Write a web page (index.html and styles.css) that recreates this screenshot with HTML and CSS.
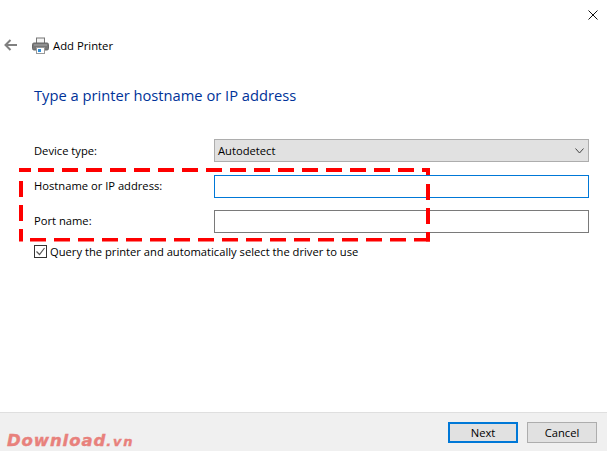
FILE: index.html
```html
<!DOCTYPE html>
<html lang="en">
<head>
<meta charset="utf-8">
<title>Add Printer</title>
<link rel="stylesheet" href="styles.css">
</head>
<body>
<div class="window">
  <div class="close-row">
    <svg class="close-icon" width="10" height="10" viewBox="0 0 10 10"><path d="M.5.5l9 9M9.5.5l-9 9" stroke="#111" stroke-width="1" fill="none"/></svg>
  </div>
  <header class="titlebar">
    <svg class="back-icon" width="14" height="12" viewBox="0 0 14 12"><path d="M13 6H2M6.500 1L1.500 6l5 5" stroke="#808080" stroke-width="2" fill="none"/></svg>
    <svg class="printer-icon" width="17" height="17" viewBox="0 0 17 17">
      <rect x="4.500" y="1" width="8" height="6" fill="#f4f4f4" stroke="#777"/>
      <rect x=".5" y="6" width="16" height="7" rx="1.5" fill="#777" stroke="#666"/>
      <rect x="2" y="7.5" width="13" height="1" fill="#aaa"/>
      <rect x="4.500" y="10.500" width="8" height="6" fill="#fff" stroke="#999"/>
      <rect x="6" y="12" width="3" height="3" fill="#2f8fd8"/>
    </svg>
    <span class="title">Add Printer</span>
  </header>
  <main class="content">
    <h1 class="heading">Type a printer hostname or IP address</h1>
    <form class="form">
      <label class="label">Device type:</label>
      <div class="combo"><span>Autodetect</span><svg width="9" height="6" viewBox="0 0 9 6"><path d="M.5.5L4.500 5 8.500.5" stroke="#444" fill="none"/></svg></div>
      <label class="label">Hostname or IP address:</label>
      <div class="input input-focus"></div>
      <label class="label">Port name:</label>
      <div class="input"></div>
    </form>
    <div class="check-row">
      <svg class="check" width="13" height="13" viewBox="0 0 13 13"><rect x=".5" y=".5" width="12" height="12" fill="#fff" stroke="#333"/><path d="M2.500 6.500l3 3 5-6.500" stroke="#555" stroke-width="1.200" fill="none"/></svg>
      <span>Query the printer and automatically select the driver to use</span>
    </div>
  </main>
  <footer class="footer">
    <span class="logo"><span class="logo-main">Download</span><span class="logo-tld">.vn</span></span>
    <div class="buttons">
      <div class="btn btn-default">Next</div>
      <div class="btn">Cancel</div>
    </div>
  </footer>
  <svg class="highlight" width="411" height="74" viewBox="0 0 411 74">
    <path class="dash-solid" d="M0 2H12"/>
    <path class="dash" d="M19 2H411"/>
    <path class="dash" d="M2 13V73.600"/>
    <path class="dash-solid" d="M409 0V7"/>
    <path class="dash" d="M409 16V73.600"/>
    <path class="dash dash-bottom" d="M11 71.800H411"/>
  </svg>
</div>
</body>
</html>
```
FILE: styles.css
```css
* { box-sizing: border-box; }
html, body { margin: 0; padding: 0; }
body {
  width: 607px;
  height: 451px;
  overflow: hidden;
  background: #fff;
  font-family: "Open Sans", "Noto Sans", sans-serif;
  font-size: 11.200px;
  color: #000;
}
.window {
  position: relative;
  width: 607px;
  height: 451px;
  display: flex;
  flex-direction: column;
}
.close-row {
  height: 34px;
  display: flex;
  justify-content: flex-end;
  padding: 10px 9px 0 0;
}
.close-icon { display: block; }
.titlebar {
  height: 22px;
  display: flex;
  align-items: center;
  padding-left: 4px;
}
.back-icon { margin-right: 14px; }
.printer-icon { margin-right: 4px; }
.title { font-size: 11.300px; }
.content {
  flex: 1;
  padding: 0 18px 0 34px;
}
.heading {
  margin: 28px 0 0;
  font-size: 14.700px;
  font-weight: 400;
  line-height: 22px;
  color: #003399;
}
.form {
  margin-top: 33px;
  display: grid;
  grid-template-columns: 180px 375px;
  grid-template-rows: 24px 23px 23px;
  row-gap: 12px;
  align-items: center;
}
.label { padding-bottom: 2px; }
.combo {
  align-self: start;
  height: 23px;
  background: #e1e1e1;
  border: 1px solid #adadad;
  display: flex;
  align-items: center;
  justify-content: space-between;
  padding: 0 4px 0 3px;
}
.input {
  height: 23px;
  background: #fff;
  border: 1px solid #7a7a7a;
}
.input-focus { border-color: #0078d7; }
.check-row {
  margin-top: 11px;
  display: flex;
  align-items: center;
  gap: 3px;
  height: 15px;
}
.footer {
  height: 39px;
  background: #f0f0f0;
  border-top: 1px solid #dfdfdf;
  display: flex;
  align-items: flex-end;
  justify-content: space-between;
  padding: 0 10px 8px 7px;
}
.logo {
  font-family: "DejaVu Sans", sans-serif;
  font-weight: 700;
  font-style: italic;
  color: #e8817c;
  line-height: 16px;
  margin-bottom: -8px;
  white-space: nowrap;
  -webkit-text-stroke: .4px #e8817c;
}
.logo-main { font-size: 16.500px; letter-spacing: .9px; }
.logo-tld { font-size: 13px; letter-spacing: 1.800px; }
.buttons { display: flex; gap: 9px; }
.btn {
  width: 70px;
  height: 21px;
  background: #e1e1e1;
  border: 1px solid #adadad;
  display: flex;
  align-items: center;
  justify-content: center;
}
.btn-default { border: 2px solid #0078d7; }
.highlight {
  position: absolute;
  left: 19px;
  top: 168px;
}
.dash, .dash-solid {
  fill: none;
  stroke: #fe0000;
  stroke-width: 4;
}
.dash { stroke-dasharray: 16 8; }
.dash-bottom { stroke-width: 3.600; }
```
